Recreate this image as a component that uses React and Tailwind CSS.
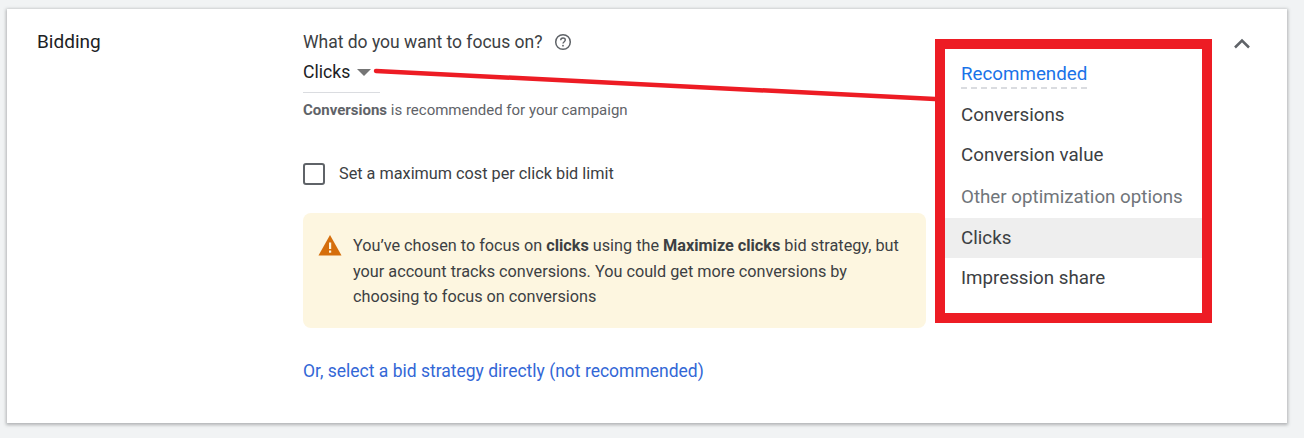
function WarningIcon() {
  return (
    <svg width="24" height="24" viewBox="0 0 24 24" className="shrink-0">
      <path d="M0.5 22.5 12 2l11.500 20.500z" fill="#d56e0c" />
      <rect x="11" y="9.500" width="2.200" height="6.500" fill="#fdf6e0" />
      <rect x="11" y="17.500" width="2.200" height="2.200" fill="#fdf6e0" />
    </svg>
  );
}

function HelpIcon() {
  return (
    <svg width="18" height="18" viewBox="0 0 18 18" fill="none" stroke="#5f6368">
      <circle cx="9" cy="9" r="7.300" strokeWidth="1.500" />
      <path d="M6.700 7.200c0-1.300 1-2.200 2.300-2.200s2.300.9 2.300 2.100c0 1.500-2.300 1.700-2.300 3.500" strokeWidth="1.400" />
      <circle cx="9" cy="12.700" r=".9" fill="#5f6368" stroke="none" />
    </svg>
  );
}

function DropdownOverlay() {
  const itemClass = 'h-10 pl-4 flex items-center';
  return (
    <div className="absolute left-[928px] top-[30px] w-[277px] h-[284px] border-[10px] border-[#ed1c24] bg-white text-[18.750px] text-[#3c4043]">
      <div className="pt-[12px] pb-[5px] pl-4">
        <span className="inline-block align-top text-[#1a73e8] leading-[26px] border-b-2 border-dashed border-[#dadce0]">
          Recommended
        </span>
      </div>
      <div className={`${itemClass} pt-[2px]`}>Conversions</div>
      <div className={`${itemClass} pt-[2px]`}>Conversion value</div>
      <div className="h-[44px] pl-4 pt-[2px] flex items-center text-[#70757a]">Other optimization options</div>
      <div className={`${itemClass} bg-[#eeeeee]`}>Clicks</div>
      <div className={itemClass}>Impression share</div>
    </div>
  );
}

export default function App() {
  return (
    <div className="min-h-[438px] bg-[#f1f3f4] pt-[9px] pl-[7px] w-[1304px] overflow-hidden font-['Roboto',sans-serif]">
      <div className="relative w-[1280px] h-[414px] bg-white flex shadow-[0_1px_3px_1px_rgba(60,64,67,0.35)]">
        <div className="w-[296px] pl-[30px] pt-[21px] text-[19px] leading-6 text-[#202124] shrink-0">Bidding</div>

        <div className="w-[623px] pt-[21px]">
          <div className="flex items-center text-[17.500px] leading-6 text-[#3c4043]">
            What do you want to focus on?
            <span className="ml-[11px] flex"><HelpIcon /></span>
          </div>
          <div className="mt-[6px] w-[77px] h-[33px] border-b border-[#dadce0] flex items-start">
            <span className="text-[17.600px] leading-6 text-[#202124]">Clicks</span>
            <span className="ml-[7px] mt-[9px] w-0 h-0 border-x-[7px] border-x-transparent border-t-[7px] border-t-[#757575]" />
          </div>
          <p className="mt-[7px] text-[15px] leading-5 text-[#5f6368]">
            <b className="font-bold">Conversions</b> is recommended for your campaign
          </p>

          <div className="mt-[42px] flex items-center h-[24px]">
            <span className="w-[22px] h-[22px] rounded-[3px] border-[2.500px] border-[#5f6368] shrink-0" />
            <span className="ml-[14px] text-[16.250px] text-[#3c4043]">Set a maximum cost per click bid limit</span>
          </div>

          <div className="mt-[27px] h-[115px] rounded-lg bg-[#fdf6e0] pl-[15px] pr-[20px] pt-[20px] flex text-[16.240px] leading-[25.500px] text-[#3c4043]">
            <WarningIcon />
            <p className="ml-[11px]">
              You’ve chosen to focus on <b>clicks</b> using the <b>Maximize clicks</b> bid strategy, but your account tracks conversions. You could get more conversions by choosing to focus on conversions
            </p>
          </div>

          <div className="mt-[31px] text-[17.500px] leading-6 text-[#3367d6]">Or, select a bid strategy directly (not recommended)</div>
        </div>

        <svg width="24" height="24" viewBox="0 0 24 24" fill="none" stroke="#5f6368" strokeWidth="2.500" className="absolute right-[33px] top-[23px]">
          <path d="M5 15.500l7-7 7 7" />
        </svg>

        {/* annotation on top of the card */}
        <svg width="570" height="40" className="absolute left-[366px] top-[59px]">
          <path d="M3 3 562 31" stroke="#ed1c24" strokeWidth="4.500" strokeLinecap="round" />
        </svg>
        <DropdownOverlay />
      </div>
    </div>
  );
}
